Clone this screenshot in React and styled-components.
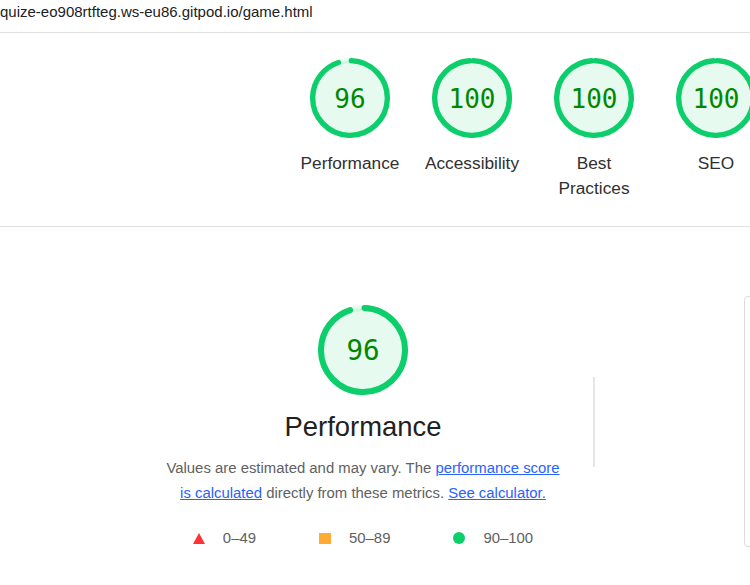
import React from "react";
import styled, { createGlobalStyle } from "styled-components";

const GlobalStyle = createGlobalStyle`
  html, body {
    margin: 0;
    padding: 0;
    background: #ffffff;
    overflow: hidden;
  }
  body {
    font-family: "Liberation Sans", Arial, sans-serif;
    width: 750px;
    height: 585px;
  }
`;

const Page = styled.div`
  width: 1100px;
`;

const UrlBar = styled.header`
  height: 32px;
  border-bottom: 1px solid #e0e0e0;
  font-size: 15px;
  line-height: 23px;
  color: #202124;
  white-space: nowrap;
`;

const GaugeRow = styled.section`
  display: flex;
  align-items: flex-start;
  gap: 22px;
  padding: 25px 0 0 300px;
  height: 168px;
  border-bottom: 1px solid #e0e0e0;
`;

const GaugeItem = styled.div`
  width: 100px;
  display: flex;
  flex-direction: column;
  align-items: center;
  text-align: center;
`;

const GaugeLabel = styled.div`
  margin-top: 13px;
  font-size: 17.3px;
  line-height: 25px;
  color: #303030;
`;

const GaugeWrap = styled.div`
  position: relative;
  width: ${(p) => p.$size}px;
  height: ${(p) => p.$size}px;
  flex: none;
`;

const GaugeSvg = styled.svg`
  display: block;
  width: 100%;
  height: 100%;
`;

const Score = styled.div`
  position: absolute;
  inset: 0;
  padding-top: 2px;
  display: flex;
  align-items: center;
  justify-content: center;
  font-family: "DejaVu Sans Mono", "Liberation Mono", monospace;
  font-size: ${(p) => p.$font}px;
  line-height: 1;
  color: #008800;
`;

function Gauge({ score, size, font }) {
  const r = 56;
  const sw = 8;
  const c = 2 * Math.PI * r;
  const pct = score / 100;
  const dash = Math.max(pct * c - 0.75 * sw, 0);
  const rot = -90 + ((0.25 * sw) / c) * 360;
  return (
    <GaugeWrap $size={size}>
      <GaugeSvg viewBox="0 0 120 120">
        <circle
          cx="60"
          cy="60"
          r={r}
          fill="rgba(12,206,107,0.1)"
          stroke="rgba(12,206,107,0.1)"
          strokeWidth={sw}
        />
        <circle
          cx="60"
          cy="60"
          r={r}
          fill="none"
          stroke="#0cce6b"
          strokeWidth={sw}
          strokeLinecap="round"
          strokeDasharray={`${dash} ${c}`}
          transform={`rotate(${rot} 60 60)`}
        />
      </GaugeSvg>
      <Score $font={font}>{score}</Score>
    </GaugeWrap>
  );
}

const MainSection = styled.section`
  padding: 68px 0 0 163px;
`;

const HeaderGrid = styled.div`
  display: grid;
  grid-template-columns: 400px 2px 400px;
  column-gap: 30px;
  align-items: center;
  justify-items: center;
`;

const LeftCol = styled.div`
  padding-top: 10px;
  display: flex;
  flex-direction: column;
  align-items: center;
  width: 100%;
`;

const Title = styled.h2`
  margin: 16px 0 0;
  font-size: 27.4px;
  line-height: 32px;
  font-weight: normal;
  color: #212121;
`;

const Description = styled.p`
  margin: 13px 0 0;
  max-width: 400px;
  font-size: 14.9px;
  line-height: 25px;
  text-align: center;
  color: #616161;
`;

const Link = styled.a`
  color: #2962ff;
  text-decoration: underline;
`;

const Legend = styled.div`
  margin-top: 22px;
  display: flex;
  gap: 63px;
  font-size: 14.9px;
  line-height: 20px;
  color: #616161;
`;

const LegendItem = styled.div`
  display: flex;
  align-items: center;
`;

const LegendIcon = styled.span`
  display: block;
  flex: none;
  margin-right: 18px;
  ${(p) =>
    p.$kind === "fail"
      ? `width: 0; height: 0; border-left: 6px solid transparent; border-right: 6px solid transparent; border-bottom: 11px solid #ff3333;`
      : p.$kind === "average"
      ? `width: 12px; height: 11px; background: #ffaa33;`
      : `width: 12px; height: 12px; border-radius: 50%; background: #0cce6b;`}
`;

const Separator = styled.div`
  width: 2px;
  height: 90px;
  background: #e6e6e6;
`;

const Screenshot = styled.div`
  width: 163px;
  height: 251px;
  box-sizing: border-box;
  border: 1px solid #dadada;
  border-radius: 4px;
  background: #ffffff;
`;

const gauges = [
  { label: "Performance", score: 96 },
  { label: "Accessibility", score: 100 },
  { label: "Best Practices", score: 100 },
  { label: "SEO", score: 100 },
];

export default function App() {
  return (
    <Page>
      <GlobalStyle />
      <UrlBar>quize-eo908rtfteg.ws-eu86.gitpod.io/game.html</UrlBar>
      <GaugeRow>
        {gauges.map((g) => (
          <GaugeItem key={g.label}>
            <Gauge score={g.score} size={80} font={26} />
            <GaugeLabel>{g.label}</GaugeLabel>
          </GaugeItem>
        ))}
      </GaugeRow>
      <MainSection>
        <HeaderGrid>
          <LeftCol>
            <Gauge score={96} size={90} font={27.5} />
            <Title>Performance</Title>
            <Description>
              Values are estimated and may vary. The{" "}
              <Link href="#">performance score is calculated</Link> directly
              from these metrics. <Link href="#">See calculator.</Link>
            </Description>
            <Legend>
              <LegendItem>
                <LegendIcon $kind="fail" />
                0–49
              </LegendItem>
              <LegendItem>
                <LegendIcon $kind="average" />
                50–89
              </LegendItem>
              <LegendItem>
                <LegendIcon $kind="pass" />
                90–100
              </LegendItem>
            </Legend>
          </LeftCol>
          <Separator />
          <Screenshot />
        </HeaderGrid>
      </MainSection>
    </Page>
  );
}
